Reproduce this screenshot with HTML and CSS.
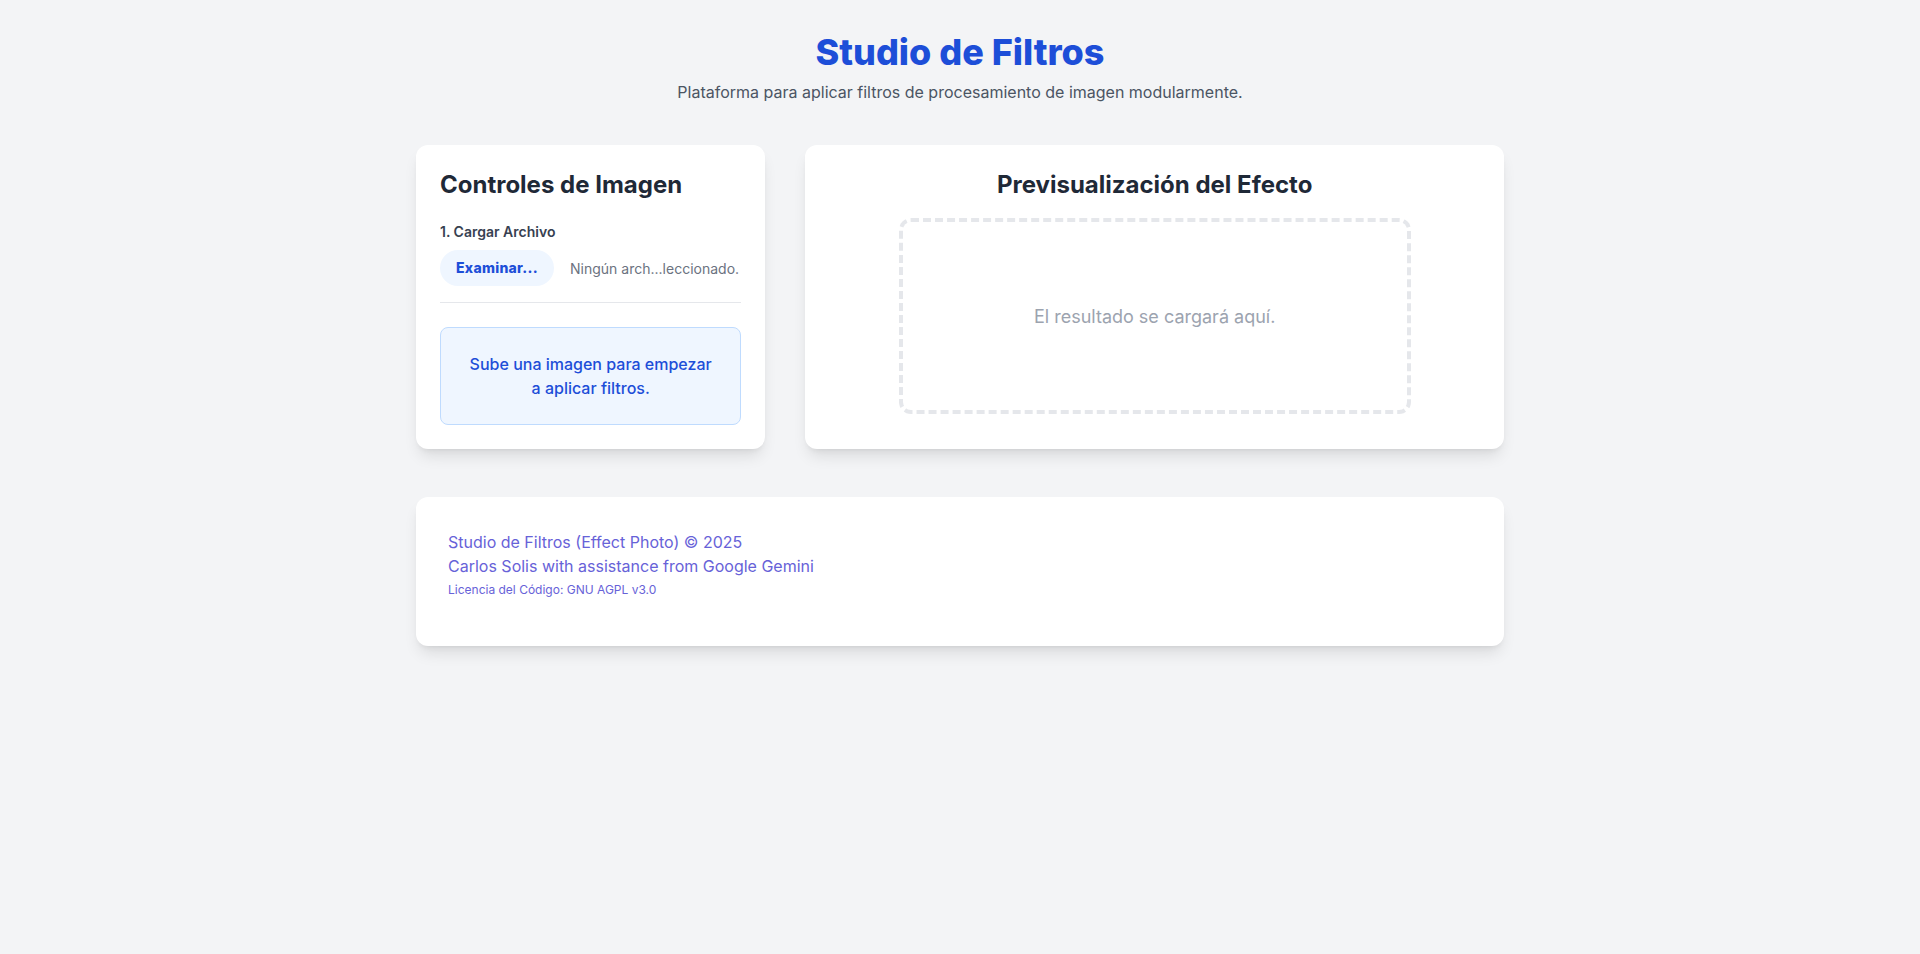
FILE: index.html
```html
<!DOCTYPE html>
<html lang="es">
<head>
    <title>Studio de Filtros</title>
    <meta charset="UTF-8">
    <meta name="viewport" content="width=device-width, initial-scale=1.0">
    <link rel="stylesheet" href="styles.css">
</head>
<body>
    <div class="page">
        <header class="header">
            <h1>Studio de Filtros</h1>
            <p>Plataforma para aplicar filtros de procesamiento de imagen modularmente.</p>
        </header>

        <div class="workspace">
            <div class="card controls">
                <h2>Controles de Imagen</h2>

                <label class="field-label" for="fileInput">1. Cargar Archivo</label>
                <div class="file-row" id="fileInput">
                    <span class="file-button">Examinar...</span>
                    <span class="file-name">Ningún arch...leccionado.</span>
                </div>

                <hr class="divider">

                <div class="info-box">
                    Sube una imagen para empezar a aplicar filtros.
                </div>
            </div>

            <div class="card preview">
                <h2>Previsualización del Efecto</h2>
                <div class="preview-area">
                    <span>El resultado se cargará aquí.</span>
                </div>
            </div>
        </div>

        <footer class="card footer">
            <p>Studio de Filtros (Effect Photo) © 2025</p>
            <p>Carlos Solis with assistance from Google Gemini</p>
            <p class="footer-license">Licencia del Código: GNU AGPL v3.0</p>
        </footer>
    </div>
</body>
</html>
```

FILE: styles.css
```css
body {
    margin: 0;
    background: #f3f4f6;
    font-family: Inter, "Noto Sans", Arial, sans-serif;
    color: #1f2937;
}

.page {
    max-width: 1152px;
    margin: 0 auto;
    padding: 32px;
    box-sizing: border-box;
}

.header {
    text-align: center;
    margin-bottom: 41px;
}

.header h1 {
    margin: 0 0 8px;
    font-size: 36px;
    line-height: 40px;
    font-weight: 800;
    color: #1d4ed8;
}

.header p {
    margin: 0;
    font-size: 16px;
    line-height: 24px;
    color: #4b5563;
}

.workspace {
    display: grid;
    grid-template-columns: 1fr 2fr;
    gap: 40px;
}

.card {
    background: white;
    border-radius: 12px;
    padding: 24px;
    box-shadow: 0 10px 15px -3px rgba(0,0,0,0.1), 0 4px 6px -4px rgba(0,0,0,0.1);
}

.card h2 {
    margin: 0;
    font-size: 24px;
    line-height: 32px;
    font-weight: 700;
    color: #1f2937;
}

.controls h2 {
    margin-bottom: 21px;
}

.field-label {
    display: block;
    margin-bottom: 8px;
    font-size: 14px;
    line-height: 20px;
    font-weight: 600;
    color: #374151;
}

.file-row {
    display: flex;
    align-items: center;
    gap: 16px;
    font-size: 14px;
}

.file-button {
    padding: 8px 16px;
    line-height: 20px;
    border-radius: 9999px;
    background: #eff6ff;
    color: #1d4ed8;
    font-weight: 800;
    letter-spacing: 0.02em;
}

.file-name {
    color: #6b7280;
}

.divider {
    margin: 16px 0 24px;
    border: none;
    border-top: 1px solid #e5e7eb;
}

.info-box {
    padding: 24px;
    border: 1px solid #bfdbfe;
    border-radius: 8px;
    background: #eff6ff;
    color: #1d4ed8;
    font-size: 16px;
    line-height: 24px;
    font-weight: 500;
    text-align: center;
}

.preview h2 {
    text-align: center;
    margin-bottom: 17px;
}

.preview-area {
    display: flex;
    align-items: center;
    justify-content: center;
    max-width: 512px;
    height: 196px;
    margin: 0 auto;
    box-sizing: border-box;
    border: 4px dashed #e5e7eb;
    border-radius: 12px;
    color: #9ca3af;
    font-size: 18px;
}

.footer {
    margin-top: 48px;
    padding: 33px 32px 32px;
    color: #6762d8;
}

.footer p {
    margin: 0;
    font-size: 16px;
    line-height: 24px;
}

.footer .footer-license {
    margin: 4px 0 16px;
    font-size: 12px;
    line-height: 16px;
}
```
